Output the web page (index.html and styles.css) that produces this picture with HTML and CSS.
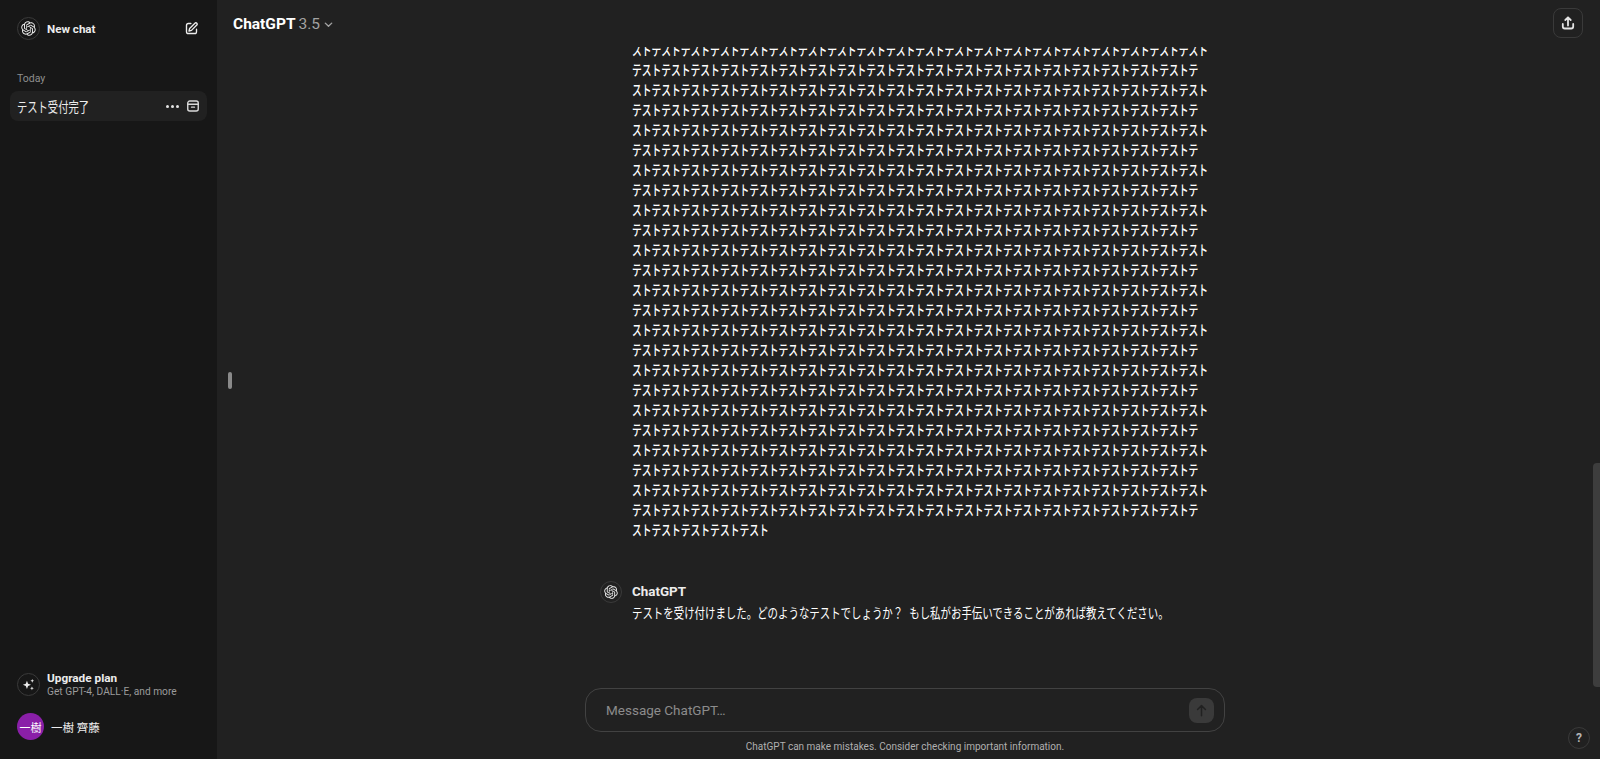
FILE: index.html
```html
<!DOCTYPE html>
<html lang="ja">
<head>
<meta charset="utf-8">
<title>ChatGPT</title>
<link rel="stylesheet" href="styles.css">
</head>
<body>
<svg class="defs" width="0" height="0"><symbol id="logo" viewBox="0 0 41 41"><path fill="currentColor" d="M37.5324 16.8707C37.9808 15.5241 38.1363 14.0974 37.9886 12.6859C37.8409 11.2744 37.3934 9.91076 36.676 8.68622C35.6126 6.83404 33.9882 5.3676 32.0373 4.4985C30.0864 3.62941 27.9098 3.40259 25.8215 3.85078C24.8796 2.7893 23.7219 1.94125 22.4257 1.36341C21.1295 0.785575 19.7249 0.491269 18.3058 0.500197C16.1708 0.495044 14.0893 1.16803 12.3614 2.42214C10.6335 3.67624 9.34853 5.44666 8.6917 7.47815C7.30085 7.76286 5.98686 8.3414 4.8377 9.17505C3.68854 10.0087 2.73073 11.0782 2.02839 12.312C0.956464 14.1591 0.498905 16.2988 0.721698 18.4228C0.944492 20.5467 1.83612 22.5449 3.268 24.1293C2.81966 25.4759 2.66413 26.9026 2.81182 28.3141C2.95951 29.7256 3.40701 31.0892 4.12437 32.3138C5.18791 34.1659 6.8123 35.6322 8.76321 36.5013C10.7141 37.3704 12.8907 37.5973 14.9789 37.1492C15.9208 38.2107 17.0786 39.0587 18.3747 39.6366C19.6709 40.2144 21.0755 40.5087 22.4946 40.4998C24.6307 40.5054 26.7133 39.8321 28.4418 38.5772C30.1704 37.3223 31.4556 35.5506 32.1119 33.5179C33.5027 33.2332 34.8167 32.6547 35.9659 31.821C37.115 30.9874 38.0728 29.9178 38.7752 28.684C39.8458 26.8371 40.3023 24.6979 40.0789 22.5748C39.8556 20.4517 38.9639 18.4544 37.5324 16.8707ZM22.4978 37.8849C20.7443 37.8874 19.0459 37.2733 17.6994 36.1501C17.7601 36.117 17.8666 36.0586 17.936 36.0161L25.9004 31.4156C26.1003 31.3019 26.2663 31.137 26.3813 30.9378C26.4964 30.7386 26.5563 30.5124 26.5549 30.2825V19.0542L29.9213 20.998C29.9389 21.0068 29.9541 21.0198 29.9656 21.0359C29.977 21.052 29.9842 21.0707 29.9867 21.0902V30.3889C29.9842 32.375 29.1946 34.2791 27.7909 35.6841C26.3872 37.0892 24.4838 37.8806 22.4978 37.8849ZM6.39227 31.0064C5.51397 29.4888 5.19742 27.7107 5.49804 25.9832C5.55718 26.0187 5.66048 26.0818 5.73461 26.1244L13.699 30.7248C13.8975 30.8408 14.1233 30.902 14.3532 30.902C14.583 30.902 14.8088 30.8408 15.0073 30.7248L24.731 25.1103V28.9979C24.7321 29.0177 24.7283 29.0376 24.7199 29.0556C24.7115 29.0736 24.6988 29.0893 24.6829 29.1012L16.6317 33.7497C14.9096 34.7416 12.8643 35.0097 10.9447 34.4954C9.02506 33.9811 7.38785 32.7263 6.39227 31.0064ZM4.29707 13.6194C5.17156 12.0998 6.55279 10.9364 8.19885 10.3327C8.19885 10.4013 8.19491 10.5228 8.19491 10.6071V19.808C8.19351 20.0378 8.25334 20.2638 8.36823 20.4629C8.48312 20.6619 8.64893 20.8267 8.84863 20.9404L18.5723 26.5542L15.206 28.4979C15.1894 28.5089 15.1703 28.5155 15.1505 28.5173C15.1307 28.5191 15.1107 28.516 15.0924 28.5082L7.04046 23.8557C5.32135 22.8601 4.06716 21.2235 3.55289 19.3046C3.03862 17.3858 3.30624 15.3413 4.29707 13.6194ZM31.955 20.0556L22.2312 14.4411L25.5976 12.4981C25.6142 12.4872 25.6333 12.4805 25.6531 12.4787C25.6729 12.4769 25.6928 12.4801 25.7111 12.4879L33.7631 17.1364C34.9967 17.849 36.0017 18.8982 36.6606 20.1613C37.3194 21.4244 37.6047 22.849 37.4832 24.2684C37.3617 25.6878 36.8382 27.0432 35.9743 28.1759C35.1103 29.3086 33.9415 30.1717 32.6047 30.6641C32.6047 30.5947 32.6047 30.4733 32.6047 30.3889V21.188C32.6066 20.9586 32.5474 20.7328 32.4332 20.5338C32.319 20.3348 32.154 20.1698 31.955 20.0556ZM35.3055 15.0128C35.2464 14.9765 35.1431 14.9142 35.069 14.8717L27.1045 10.2712C26.906 10.1554 26.6803 10.0943 26.4504 10.0943C26.2206 10.0943 25.9948 10.1554 25.7963 10.2712L16.0726 15.8858V11.9982C16.0715 11.9783 16.0753 11.9585 16.0837 11.9405C16.0921 11.9225 16.1048 11.9068 16.1207 11.8949L24.1719 7.25025C25.4053 6.53903 26.8158 6.19376 28.2383 6.25482C29.6608 6.31589 31.0364 6.78077 32.2044 7.59508C33.3723 8.40939 34.2842 9.53945 34.8334 10.8531C35.3826 12.1667 35.5464 13.6095 35.3055 15.0128ZM14.2424 21.9419L10.8752 19.9981C10.8576 19.9893 10.8423 19.9763 10.8309 19.9602C10.8195 19.9441 10.8122 19.9254 10.8098 19.9058V10.6071C10.8107 9.18295 11.2173 7.78848 11.9819 6.58696C12.7466 5.38544 13.8377 4.42659 15.1275 3.82264C16.4173 3.21869 17.8524 2.99464 19.2649 3.1767C20.6775 3.35876 22.0089 3.93941 23.1034 4.85067C23.0427 4.88379 22.937 4.94215 22.8668 4.98473L14.9024 9.58517C14.7025 9.69878 14.5366 9.86356 14.4215 10.0626C14.3065 10.2616 14.2466 10.4877 14.2479 10.7175L14.2424 21.9419ZM16.071 17.9991L20.4018 15.4978L24.7325 17.9975V22.9985L20.4018 25.4983L16.071 22.9985V17.9991Z"/></symbol></svg>
<div class="app">
  <aside class="sidebar">
    <div class="new-chat">
      <span class="logo-ring"><svg class="logo"><use href="#logo"/></svg></span>
      <span class="new-chat-label">New chat</span>
      <svg class="edit-icon" viewBox="0 0 24 24" fill="none" stroke="currentColor" stroke-width="2.200" stroke-linecap="round" stroke-linejoin="round"><path d="M11 4H7a3 3 0 0 0-3 3v10a3 3 0 0 0 3 3h10a3 3 0 0 0 3-3v-4"/><path d="M17.500 3.500a2.100 2.100 0 0 1 3 3L12 15l-4 1 1-4z"/></svg>
    </div>
    <div class="section-label">Today</div>
    <div class="chat-row">
      <span class="chat-title"><span class="chat-title-inner">テスト受付完了</span></span>
      <span class="dots"><i></i><i></i><i></i></span>
      <svg class="archive-icon" viewBox="0 0 24 24" fill="none" stroke="currentColor" stroke-width="2.400" stroke-linecap="round" stroke-linejoin="round"><rect x="3" y="3.500" width="18" height="17" rx="3.500"/><path d="M3 9h18M9.500 14h5"/></svg>
    </div>
    <div class="sidebar-spacer"></div>
    <div class="upgrade">
      <span class="logo-ring"><svg class="sparkle" viewBox="0 0 24 24" fill="currentColor"><path d="M9.500 6l1.800 4.700L16 12.500l-4.700 1.800L9.500 19l-1.800-4.700L3 12.500l4.700-1.800z"/><path d="M18 3l.9 2.100L21 6l-2.100.9L18 9l-.9-2.100L15 6l2.100-.9z"/><path d="M17.500 15l.9 2.100 2.100.9-2.100.9-.9 2.100-.9-2.100-2.100-.9 2.100-.9z"/></svg></span>
      <span class="upgrade-text"><span class="upgrade-title">Upgrade plan</span><span class="upgrade-sub">Get GPT-4, DALL·E, and more</span></span>
    </div>
    <div class="user">
      <span class="avatar">一樹</span>
      <span class="user-name">一樹 齊藤</span>
    </div>
  </aside>
  <main class="main">
    <header class="topbar">
      <div class="model"><span class="model-name">ChatGPT</span> <span class="model-ver">3.5</span>
        <svg class="chevron" viewBox="0 0 12 12" fill="none" stroke="currentColor" stroke-width="1.500" stroke-linecap="round" stroke-linejoin="round"><path d="M2.500 4.500L6 8l3.500-3.500"/></svg>
      </div>
      <button class="share" aria-label="Share"><svg viewBox="0 0 16 16" fill="none" stroke="currentColor" stroke-width="1.800" stroke-linecap="round" stroke-linejoin="round"><path d="M8 10.500V2.500M5.300 5L8 2.300 10.700 5"/><path d="M2.800 9v2.500A2 2 0 0 0 4.800 13.500h6.400a2 2 0 0 0 2-2V9"/></svg></button>
    </header>
    <div class="thread">
      <div class="thread-inner">
        <div class="long-box"><p class="long">ストテストテストテストテストテストテストテストテストテストテストテストテストテストテストテストテストテストテストテスト
テストテストテストテストテストテストテストテストテストテストテストテストテストテストテストテストテストテストテストテ
ストテストテストテストテストテストテストテストテストテストテストテストテストテストテストテストテストテストテストテスト
テストテストテストテストテストテストテストテストテストテストテストテストテストテストテストテストテストテストテストテ
ストテストテストテストテストテストテストテストテストテストテストテストテストテストテストテストテストテストテストテスト
テストテストテストテストテストテストテストテストテストテストテストテストテストテストテストテストテストテストテストテ
ストテストテストテストテストテストテストテストテストテストテストテストテストテストテストテストテストテストテストテスト
テストテストテストテストテストテストテストテストテストテストテストテストテストテストテストテストテストテストテストテ
ストテストテストテストテストテストテストテストテストテストテストテストテストテストテストテストテストテストテストテスト
テストテストテストテストテストテストテストテストテストテストテストテストテストテストテストテストテストテストテストテ
ストテストテストテストテストテストテストテストテストテストテストテストテストテストテストテストテストテストテストテスト
テストテストテストテストテストテストテストテストテストテストテストテストテストテストテストテストテストテストテストテ
ストテストテストテストテストテストテストテストテストテストテストテストテストテストテストテストテストテストテストテスト
テストテストテストテストテストテストテストテストテストテストテストテストテストテストテストテストテストテストテストテ
ストテストテストテストテストテストテストテストテストテストテストテストテストテストテストテストテストテストテストテスト
テストテストテストテストテストテストテストテストテストテストテストテストテストテストテストテストテストテストテストテ
ストテストテストテストテストテストテストテストテストテストテストテストテストテストテストテストテストテストテストテスト
テストテストテストテストテストテストテストテストテストテストテストテストテストテストテストテストテストテストテストテ
ストテストテストテストテストテストテストテストテストテストテストテストテストテストテストテストテストテストテストテスト
テストテストテストテストテストテストテストテストテストテストテストテストテストテストテストテストテストテストテストテ
ストテストテストテストテストテストテストテストテストテストテストテストテストテストテストテストテストテストテストテスト
テストテストテストテストテストテストテストテストテストテストテストテストテストテストテストテストテストテストテストテ
ストテストテストテストテストテストテストテストテストテストテストテストテストテストテストテストテストテストテストテスト
テストテストテストテストテストテストテストテストテストテストテストテストテストテストテストテストテストテストテストテ
ストテストテストテストテスト</p></div>
        <div class="reply">
          <span class="logo-ring small"><svg class="logo"><use href="#logo"/></svg></span>
          <div class="reply-body">
            <div class="reply-author">ChatGPT</div>
            <p class="reply-text">テストを受け付けました。どのようなテストでしょうか？ もし私がお手伝いできることがあれば教えてください。</p>
          </div>
        </div>
      </div>
    </div>
    <div class="composer">
      <div class="input">
        <span class="placeholder">Message ChatGPT…</span>
        <button class="send" aria-label="Send"><svg viewBox="0 0 16 16" fill="none" stroke="currentColor" stroke-width="1.600" stroke-linecap="round" stroke-linejoin="round"><path d="M8 13.500V2.800M3.800 7L8 2.800 12.200 7"/></svg></button>
      </div>
      <div class="disclaimer">ChatGPT can make mistakes. Consider checking important information.</div>
    </div>
    <span class="handle"></span>
    <span class="scroll-thumb"></span>
    <span class="help">?</span>
  </main>
</div>
</body>
</html>
```
FILE: styles.css
```css
* { box-sizing: border-box; }
html, body { margin: 0; height: 100%; overflow: hidden; }
body { background: #212121; color: #ececec; font-family: Roboto, "Noto Sans CJK JP", sans-serif; }
p { margin: 0; }
.defs { position: absolute; }
.app { display: flex; height: 759px; }

.sidebar { width: 217px; flex: none; background: #171717; display: flex; flex-direction: column; }
.logo-ring { width: 23px; height: 23px; border-radius: 50%; border: 1px solid #3a3a3a; display: flex; align-items: center; justify-content: center; flex: none; color: #ececec; }
.logo { width: 15px; height: 15px; }
.new-chat { display: flex; align-items: center; height: 23px; margin: 17px 17px 0; gap: 7px; }
.new-chat-label { font-size: 11.600px; font-weight: 700; flex: 1; }
.edit-icon { width: 15px; height: 15px; margin-right: 1px; }
.section-label { margin: 32px 0 0 17px; font-size: 10.500px; line-height: 14px; color: #8e8e8e; }
.chat-row { display: flex; align-items: center; height: 30px; margin: 5px 10px 0; padding: 0 7px 0 7px; background: #212121; border-radius: 8px; }
.chat-title { flex: 1; font-size: 14px; line-height: 20px; white-space: nowrap; }
.chat-title-inner { display: inline-block; font-family: "Noto Sans CJK JP", sans-serif; transform: scaleX(.735); transform-origin: 0 50%; }
.dots { display: flex; gap: 2px; margin-right: 7px; }
.dots i { width: 3px; height: 3px; border-radius: 50%; background: #e3e3e3; }
.archive-icon { width: 14px; height: 14px; color: #d9d9d9; }
.sidebar-spacer { flex: 1; }
.upgrade { display: flex; align-items: center; gap: 7px; margin: 0 17px; }
.sparkle { width: 15px; height: 15px; }
.upgrade-text { display: flex; flex-direction: column; }
.upgrade-title { font-size: 11.800px; line-height: 14px; font-weight: 700; }
.upgrade-sub { font-size: 10.200px; line-height: 13px; color: #9b9b9b; }
.user { display: flex; align-items: center; gap: 7px; margin: 15px 17px 19px; }
.avatar { width: 27px; height: 27px; border-radius: 50%; background: #8a1fa8; display: flex; align-items: center; justify-content: center; font-size: 11px; color: #fff; white-space: nowrap; }
.user-name { font-size: 11.500px; color: #ececec; }

.main { flex: 1; min-width: 0; position: relative; display: flex; flex-direction: column; }
.topbar { height: 47px; flex: none; display: flex; align-items: flex-start; justify-content: space-between; padding: 8px 17px 0 16px; }
.model { display: flex; align-items: center; height: 16px; margin-top: 8px; font-size: 15.500px; gap: 3px; }
.model-name { font-weight: 700; color: #fff; }
.model-ver { color: #a3a3a3; }
.chevron { width: 11px; height: 11px; color: #a3a3a3; }
.share { width: 30px; height: 30px; padding: 6px; background: none; border: 1px solid #3a3a3a; border-radius: 8px; color: #e3e3e3; }
.share svg { width: 16px; height: 16px; display: block; }

.thread { flex: 1; min-height: 0; overflow: hidden; }
.thread-inner { width: 640px; margin: -8px 0 0 368px; padding-left: 15px; position: relative; }
.long-box { padding-left: 32px; height: 500px; }
.long { font-family: "Noto Sans CJK JP", sans-serif; font-size: 14px; font-weight: 500; line-height: 20px; color: #fff; white-space: pre-line; width: 840px; transform: scaleX(.6975); transform-origin: 0 0; }
.reply { display: flex; gap: 10px; align-items: flex-start; margin-top: 42px; }
.logo-ring.small { width: 22px; height: 22px; }
.logo-ring.small .logo { width: 14px; height: 14px; }
.reply-author { font-size: 13.400px; line-height: 21px; font-weight: 700; }
.reply-text { font-family: "Noto Sans CJK JP", sans-serif; font-size: 14px; line-height: 20px; color: #fff; white-space: nowrap; word-spacing: 5px; transform: scaleX(.745); transform-origin: 0 0; }

.composer { flex: none; display: flex; flex-direction: column; align-items: center; padding: 0 0 6px 0; }
.input { width: 640px; height: 44px; border: 1px solid #424242; border-radius: 16px; display: flex; align-items: center; justify-content: space-between; padding: 0 10px 0 20px; margin-left: -7px; }
.placeholder { font-size: 13.500px; color: #8c8c8c; }
.send { width: 25px; height: 25px; padding: 5px; border: none; border-radius: 8px; background: #3a3a3a; color: #212121; }
.send svg { width: 15px; height: 15px; display: block; }
.disclaimer { font-size: 10px; line-height: 14px; color: #b0b0b0; margin: 8px 0 -1px -7px; }

.handle { position: absolute; left: 11px; top: 372px; width: 4px; height: 17px; border-radius: 2px; background: #8a8a8a; }
.scroll-thumb { position: absolute; right: 0; top: 463px; width: 7px; height: 224px; border-radius: 4px 0 0 4px; background: #3d3d3d; }
.help { position: absolute; right: 10px; bottom: 10px; width: 22px; height: 22px; border-radius: 50%; border: 1px solid #3a3a3a; display: flex; align-items: center; justify-content: center; font-size: 12px; font-weight: 700; color: #b5b5b5; }
```
